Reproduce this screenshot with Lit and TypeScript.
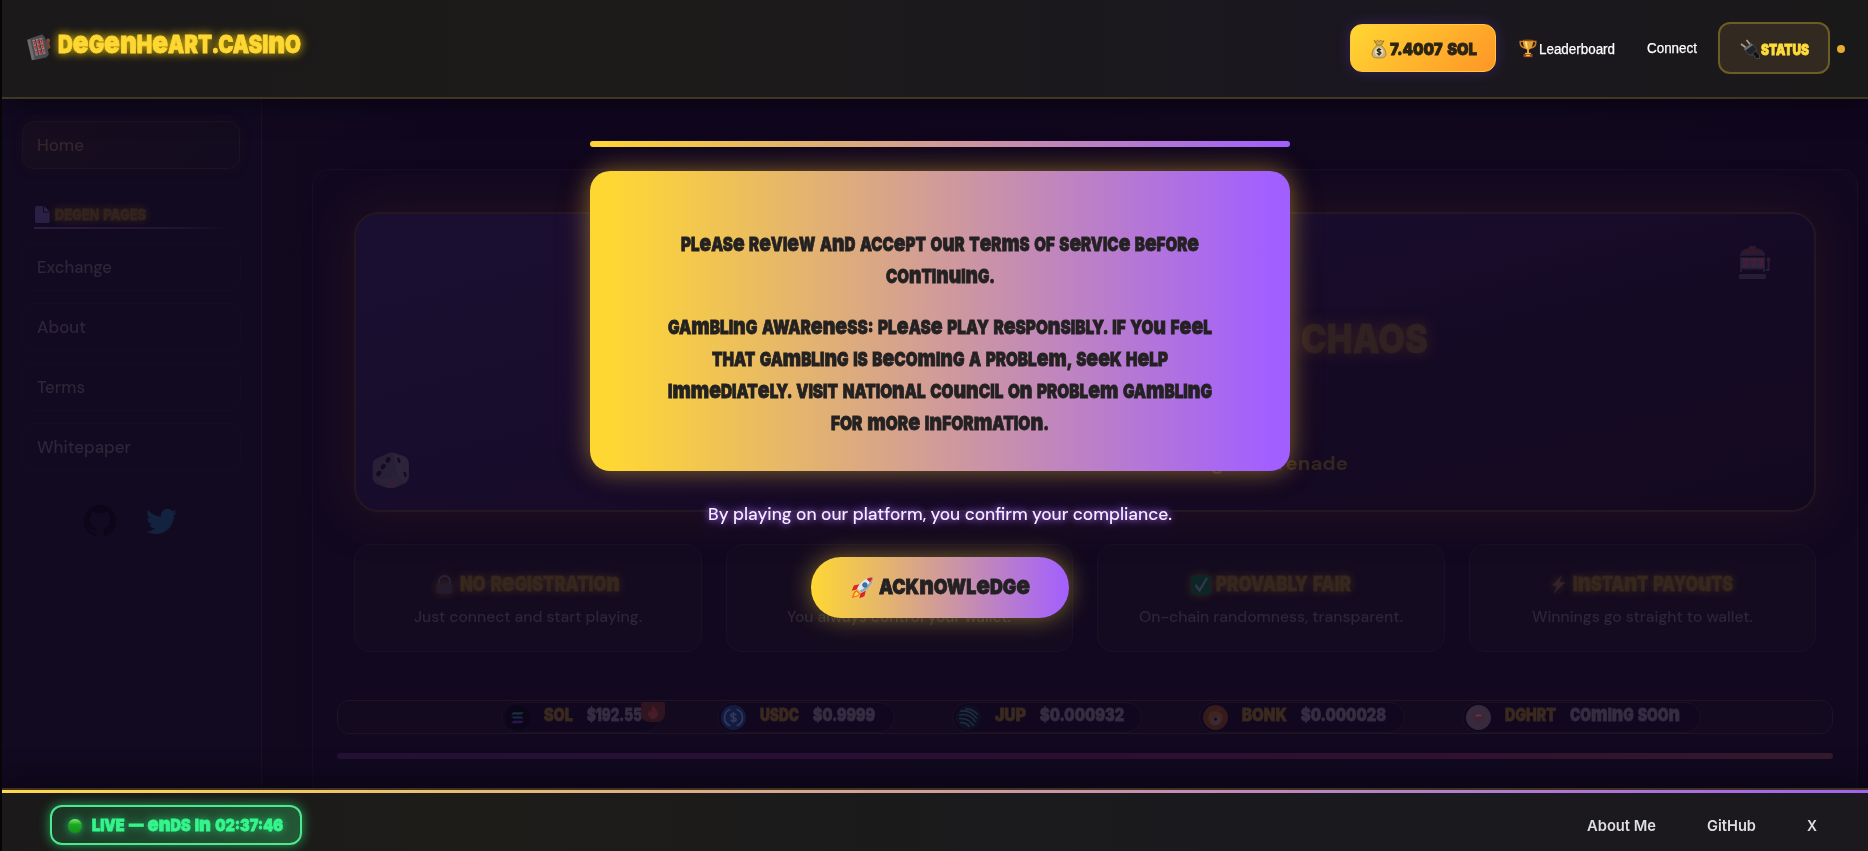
import { LitElement, html, svg, css } from "lit";
import { customElement, property } from "lit/decorators.js";

/** One line of lettering, stretched horizontally to a given width. */
@customElement("fit-text")
export class FitText extends LitElement {
  @property() text = "";
  @property({ type: Number }) w = 100;
  @property({ type: Number }) size = 16;
  @property({ type: Number }) h = 16;
  @property({ type: Boolean }) funky = false;

  static styles = css`
    :host { display: block; flex: none; white-space: nowrap; }
    .line { display: inline-block; transform-origin: 0 50%; vertical-align: top; }
    .display { font-family: Inter, Lato, sans-serif; font-weight: 900; word-spacing: 0.1em; -webkit-text-stroke: 0.8px currentColor; }
    .big { font-size: 1.27em; line-height: 0; }
  `;

  updated() {
    const line = this.renderRoot.querySelector(".line") as HTMLElement;
    line.style.transform = "none";
    const natural = line.getBoundingClientRect().width;
    if (natural) line.style.transform = `scaleX(${this.w / natural})`;
  }

  render() {
    const box = `font-size:${this.size}px;line-height:${this.h}px;height:${this.h}px`;
    this.style.width = `${this.w}px`;
    this.style.height = `${this.h}px`;
    if (!this.funky) return html`<span class="line" style=${box}>${this.text}</span>`;
    // Display lettering mixes capitals with enlarged e / n / m / u.
    const runs = this.text.match(/[enmu]+|[^enmu]+/g) ?? [];
    return html`<span class="line display" style=${box}>${runs.map((r) =>
      /[enmu]/.test(r[0]) ? html`<span class="big">${r}</span>` : r.toUpperCase()
    )}</span>`;
  }
}

const funky = (text: string, w: number, size: number, h = size) =>
  html`<fit-text class="funky" funky .text=${text} .w=${w} .size=${size} .h=${h}></fit-text>`;

const plain = (text: string, w: number, size: number, cls = "") =>
  html`<fit-text class="plain ${cls}" .text=${text} .w=${w} .size=${size} .h=${size}></fit-text>`;

const slotTilted = html`<svg class="ic" width="26" height="27" viewBox="0 0 26 27">
  <g transform="rotate(-13 12 13)"><path d="M20 9l4 1.5v6L20 18z" fill="#6d4438"/><circle cx="23.3" cy="9" r="2" fill="#7d463c"/>
  <path d="M3 3.5h4v21H3z" fill="#6d6d70"/><path d="M6 3l13-1.5 2 4v17l-3 2.5H6z" fill="#4d4c50"/>
  <rect x="8" y="5" width="10" height="16" fill="#8b8689"/>
  <path d="M11 5v16M14.6 5v16" stroke="#3a383c" stroke-width="1"/>
  <g stroke="#b92d2b" stroke-width="1.2" fill="none"><path d="M8.3 7h2l-1 3M11.8 7h2l-1 3M15.3 7h2l-1 3M8.3 12h2l-1 3M11.8 12h2l-1 3M15.3 12h2l-1 3M8.3 17h2l-1 3M11.8 17h2l-1 3M15.3 17h2l-1 3"/></g></g></svg>`;

const moneyBag = html`<svg class="ic" width="16" height="20" viewBox="0 0 16 20">
  <path d="M3 1.5l2 1 1.5-1.3L8 2.5l2-1.3 1 1.3 2-.8-2.6 4.6H6z" fill="#d0a24c" stroke="#775a20" stroke-width=".6"/>
  <path d="M5.8 6.5h4.6C13.5 9 15 12 15 15c0 3-2 4-7 4s-7-1-7-4c0-3 1.7-6 4.8-8.5z" fill="#cfb27c" stroke="#7c6330" stroke-width=".6"/>
  <path d="M5.2 6.4h5.8" stroke="#a92" stroke-width="1.4"/><circle cx="8" cy="12.8" r="4.4" fill="#e9dcae"/>
  <path d="M10 11c-.5-1-3.8-1.3-3.8.3 0 1.7 3.8 1 3.8 2.8 0 1.6-3.4 1.5-4 .2M8 9v7.8" fill="none" stroke="#222" stroke-width="1.2"/></svg>`;

const trophy = html`<svg class="ic" width="18" height="19" viewBox="0 0 18 19">
  <path d="M4 2.5H1.2C1 6 3 8.5 6 9M14 2.5h2.8C17 6 15 8.5 12 9" fill="none" stroke="#c7791c" stroke-width="1.5"/>
  <path d="M3.8 1h10.4c0 5-1.4 9-4.2 9.7V14H8v-3.3C5.2 10 3.8 6 3.8 1z" fill="#e3a02f"/>
  <path d="M6 2h2.2c0 4 .3 6 1 8C7 9 6 6 6 2z" fill="#fbe08a"/><ellipse cx="9" cy="1.4" rx="5.2" ry=".9" fill="#8c4e12"/>
  <path d="M6.5 13.8h5l.8 1.4H5.7z" fill="#f0b94a"/><path d="M4.5 15h9v3.2h-9z" fill="#9b4a18"/><path d="M7 15.8h4v1.5H7z" fill="#e8b850"/></svg>`;

const plug = html`<svg class="ic" width="20" height="20" viewBox="0 0 20 20">
  <path d="M1 5l5.500 4M6.500 1L10.500 6" stroke="#aaa48c" stroke-width="1.7"/>
  <path d="M11.500 4.500l4.800 4.800-.6 4.200-3 2.500-4.100-.4L4 10z" fill="#202328" stroke="#4d5056" stroke-width=".7"/><path d="M11.5 4.500L4 10l1.400 1.500 7.600-5.500z" fill="#6a6e75"/>
  <path d="M12.5 14.500l3-2.500 4 4v3.500h-3.500z" fill="#121316" stroke="#54565c" stroke-width=".7"/></svg>`;

const rocket = html`<svg class="ic" width="23" height="23" viewBox="0 0 24 24">
  <path d="M9 8.500L3 10 .8 15.500l5-1.500zM15.500 15L14 21l-5.300 2.200L10 18z" fill="#d8262c"/>
  <path d="M6 14.500C2.500 15.500 2.300 19 .8 23c4-1.200 7.700-1.500 8.700-5z" fill="#ff6a1a"/><path d="M5.8 16.500c-2 .8-2 3-2.700 4.800 2-.6 4.200-.8 5-2.800z" fill="#ffe14a"/>
  <path d="M22.500 1.500C16 1.500 10.500 5 6.500 13l4.500 4.500c8-4 11.500-9.500 11.500-16z" fill="#dbe6ee"/>
  <path d="M22.500 1.500c-2.200 0-4.400.5-6.300 1.500l4.800 4.800c1-1.900 1.500-4.100 1.500-6.300z" fill="#d8262c"/>
  <path d="M22.500 1.500c0 6.500-3.500 12-11.500 16l-2-2C16 11.500 20.500 7 22.500 1.500z" fill="#92a7b8"/>
  <circle cx="14.5" cy="9.4" r="2.3" fill="#237cc0" stroke="#47596a" stroke-width="1"/></svg>`;

const pageIcon = html`<svg class="ic" width="15" height="17" viewBox="0 0 15 17"><path d="M0 1.5Q0 0 1.5 0H8v6.5h6.7V15.5Q14.7 17 13.2 17H1.5Q0 17 0 15.5z" fill="#292045"/><path d="M9.2 0l5.5 5.4H9.2z" fill="#2e2547"/></svg>`;

const github = html`<svg class="ic" width="32" height="32" viewBox="0 0 16 16"><path fill="#0d0619" d="M8 0C3.580 0 0 3.580 0 8c0 3.540 2.290 6.530 5.470 7.590.4.070.55-.17.55-.38 0-.19-.01-.82-.01-1.490-2.010.37-2.530-.49-2.690-.94-.09-.23-.48-.94-.82-1.130-.28-.15-.68-.52-.01-.53.63-.01 1.080.58 1.230.82.72 1.210 1.870.87 2.330.66.070-.52.280-.87.510-1.070-1.780-.2-3.640-.89-3.640-3.950 0-.87.310-1.590.82-2.150-.08-.2-.36-1.020.08-2.120 0 0 .67-.21 2.200.82.640-.18 1.320-.27 2-.27s1.360.09 2 .27c1.530-1.040 2.200-.82 2.200-.82.440 1.100.16 1.920.08 2.120.51.560.82 1.270.82 2.150 0 3.070-1.870 3.750-3.650 3.950.29.25.54.73.54 1.480 0 1.070-.01 1.930-.01 2.200 0 .21.15.46.55.38A8.010 8.010 0 0016 8c0-4.420-3.580-8-8-8z"/></svg>`;

const twitter = html`<svg class="ic" width="31" height="31" viewBox="0 0 24 24"><path fill="#13233f" d="M23.953 4.570a10 10 0 01-2.825.775 4.958 4.958 0 002.163-2.723c-.951.555-2.005.959-3.127 1.184a4.920 4.920 0 00-8.384 4.482C7.690 8.095 4.067 6.130 1.640 3.162a4.822 4.822 0 00-.666 2.475c0 1.710.87 3.213 2.188 4.096a4.904 4.904 0 01-2.228-.616v.06a4.923 4.923 0 003.946 4.827 4.996 4.996 0 01-2.212.085 4.936 4.936 0 004.604 3.417 9.867 9.867 0 01-6.102 2.105c-.39 0-.779-.023-1.170-.067a13.995 13.995 0 007.557 2.209c9.053 0 13.998-7.496 13.998-13.985 0-.21 0-.42-.015-.63A9.935 9.935 0 0024 4.590z"/></svg>`;

const slotFaint = html`<svg class="ic" width="33" height="33" viewBox="0 0 33 33">
  <path d="M2 9C3 3 8 2 14.500 2S26 3 27 9v17H2z" fill="#281a36"/><path d="M4 8c1-4 5-5 10.500-5S24 4 25 8z" fill="#30182d"/><rect x="11" y="0" width="7" height="3" rx="1" fill="#30182d"/>
  <rect x="3" y="11.500" width="23" height="10.500" fill="#2c233d"/><rect x="1" y="28" width="27" height="5" rx="1" fill="#271d38"/><rect x="4" y="23.500" width="21" height="3" fill="#130b22"/>
  <path d="M2.500 10.500h24" stroke="#120a20" stroke-width="1.5"/><path d="M28 24h2.500V14" fill="none" stroke="#291d38" stroke-width="2"/><circle cx="30.5" cy="13.5" r="2" fill="#3b182b"/>
  <g fill="none" stroke="#511a32" stroke-width="2"><path d="M4.500 14h5l-2.500 7M12 14h5l-2.500 7M19.500 14h5L22 21"/></g></svg>`;

const dice = html`<svg class="ic" width="38" height="37" viewBox="0 0 39 38">
  <path d="M18 .8Q21 0 24 1L33 4Q37 6 38 11V24Q38 30 34 32L24 36.500Q19 38 14 36.500L5 33Q1 31 .6 26V13Q1 8 5 6.500z" fill="#272036"/>
  <path d="M22 2L33 5Q37 7 37.500 12V24Q37 30 33 32l-7-8z" fill="#2b243a"/><path d="M3 28L25 24l7 8-8 4Q19 38 14 36z" fill="#292238"/>
  <g fill="#130b20"><ellipse cx="16.5" cy="8" rx="2.2" ry="3" transform="rotate(25 16.5 8)"/><ellipse cx="11.5" cy="15" rx="2.2" ry="3" transform="rotate(35 11.5 15)"/><ellipse cx="7" cy="22" rx="2.2" ry="3" transform="rotate(40 7 22)"/><ellipse cx="27.5" cy="8.500" rx="1.5" ry="3" transform="rotate(-20 27.5 8.5)"/><ellipse cx="34" cy="23" rx="1.4" ry="3" transform="rotate(-15 34 23)"/></g>
  <ellipse cx="19.5" cy="32" rx="3.8" ry="1.5" fill="#42192e"/></svg>`;

const lock = html`<svg class="ic" width="17" height="19" viewBox="0 0 17 19"><path d="M3 9V6.500a5.500 5.500 0 0111 0V9" fill="none" stroke="#2a2436" stroke-width="1.8"/><rect x=".5" y="8.5" width="16" height="10" rx="1" fill="#241b2c"/></svg>`;
const check = html`<svg class="ic" width="20" height="20" viewBox="0 0 20 20"><rect width="20" height="20" rx="3" fill="#0e2528"/><path d="M4.500 10l4 5.500L16 3" fill="none" stroke="#35374a" stroke-width="2.2"/></svg>`;
const bolt = html`<svg class="ic" width="15" height="19" viewBox="0 0 15 19"><path d="M11 0L1 10.500l5 .5L2.500 19 14 7.500 8.500 7z" fill="#34232b"/></svg>`;
const greenDot = html`<svg class="ic dot" width="14" height="14" viewBox="0 0 14 14"><defs><linearGradient id="g" x1="0" y1="0" x2="0" y2="1"><stop offset="0" stop-color="#7cf06a"/><stop offset=".4" stop-color="#1fa524"/><stop offset="1" stop-color="#129318"/></linearGradient></defs><circle cx="7" cy="7" r="7" fill="url(#g)"/></svg>`;
const flame = html`<svg width="12" height="14" viewBox="0 0 12 14"><path d="M6 0c1 3 5 5 5 9 0 3-2 5-5 5s-5-2-5-5c0-2 1-3 2-4 .3 1 .6 1.500 1.200 2C4.500 5 5 2 6 0z" fill="#4a1a26"/><path d="M6 7c1 2 2 2.500 2 4a2 2 0 01-4 0c0-1.500 1.500-2 2-4z" fill="#3d2330"/></svg>`;

const coins: Record<string, unknown> = {
  SOL: svg`<circle cx="12" cy="12" r="12" fill="#0b0719"/><g><path d="M8 7h10l-2 2H6z" fill="#14333c"/><path d="M6 11h10l2 2H8z" fill="#1d2650"/><path d="M8 15h10l-2 2.500H6z" fill="#2c154e"/></g>`,
  USDC: svg`<circle cx="12" cy="12" r="12" fill="#131c40"/><g fill="none" stroke="#33385c" stroke-width="1.6"><path d="M9 4a8.500 8.500 0 000 16M15 4a8.500 8.500 0 010 16M14.500 10c-.4-2-5-2.300-5 0 0 2.400 5 1.500 5 4 0 2.300-4.600 2.300-5 0M12 7v10"/></g>`,
  JUP: svg`<circle cx="12" cy="12" r="12" fill="#100e22"/><g fill="none" stroke="#1c2e40" stroke-width="1.5"><path d="M4 6q9-2 16 7M3 9.500q10-2 16 7M3 13q9-1 14 7M4 17q6-.5 9 4M9 3.500q8 .5 12 6"/></g>`,
  BONK: svg`<circle cx="12" cy="12" r="12" fill="#361b1d"/><path d="M5 13Q5 5 12 6t7 5q0 8-7 9-6 0-7-7z" fill="#41251e"/><path d="M8 13q4-4 9 0-1 6-5 6-3 0-4-6z" fill="#352c3c"/><circle cx="12" cy="13.5" r="1.6" fill="#160c1e"/><path d="M13 4l4 1" stroke="#451a22" stroke-width="2"/>`,
  DGHRT: svg`<circle cx="12" cy="12" r="12" fill="#352b3d"/><circle cx="12" cy="12" r="8.5" fill="none" stroke="#43293a"/><path d="M12 17q-6-4.500-5-8 2-3 5 0 3-3 5 0 1 3.500-5 8z" fill="#462033"/><path d="M9 10h6" stroke="#4a3e50" stroke-width="2"/>`,
};

const nav = [
  { label: "Exchange", w: 75 },
  { label: "About", w: 49 },
  { label: "Terms", w: 48 },
  { label: "Whitepaper", w: 94 },
];

const tokens = [
  { name: "SOL", nw: 29, price: "$192.55", pw: 55, w: 159 },
  { name: "USDC", nw: 39, price: "$0.9999", pw: 62, w: 178 },
  { name: "JUP", nw: 31, price: "$0.000932", pw: 84, w: 190 },
  { name: "BONK", nw: 45, price: "$0.000028", pw: 85, w: 206 },
  { name: "DGHRT", nw: 51, price: "Coming Soon", pw: 110, w: 239 },
];

const features = [
  { icon: lock, title: "No Registration", tw: 160, gap: 7, desc: "Just connect and start playing.", dw: 228 },
  { icon: null, title: "", tw: 0, gap: 0, desc: "You always control your wallet.", dw: 224 },
  { icon: check, title: "PROVABLY FAIR", tw: 135, gap: 5, desc: "On-chain randomness, transparent.", dw: 264 },
  { icon: bolt, title: "Instant Payouts", tw: 160, gap: 7, desc: "Winnings go straight to wallet.", dw: 221 },
];

@customElement("app-root")
export class AppRoot extends LitElement {
  static styles = css`
    :host { display: block; position: relative; width: 1868px; height: 851px; overflow: hidden; box-sizing: border-box; border-left: 2px solid #060507; background: #10071e; font-family: Inter, "Liberation Sans", sans-serif; }
    * { box-sizing: border-box; }
    svg { display: block; flex: none; overflow: visible; }
    .plain { font-family: "DM Sans", Inter, sans-serif; font-weight: 400; }
    .plain.arial { font-family: "Liberation Sans", Arial, sans-serif; -webkit-text-stroke: 0.25px currentColor; }
    .plain.inter { font-family: Inter, sans-serif; font-weight: 600; }
    .plain.semi { font-weight: 500; }
    .plain.bold { font-weight: 700; }
    .page { display: grid; grid-template-rows: 99px 689px 63px; height: 851px; }

    header { display: flex; align-items: center; border-bottom: 2px solid #3f3722; background: linear-gradient(90deg, #1b191a, #1c1b19 33%, #1b1720 72%, #1b181c 90%, #1a1919); padding: 0 23px 0 25px; z-index: 1; box-shadow: 0 4px 24px rgba(4, 2, 14, 0.6); }
    .logo { display: flex; align-items: center; gap: 5px; padding-bottom: 7px; margin-right: auto; color: #ffd732; }
    .logo .ic { margin-top: 5px; margin-left: -1px; margin-right: 1px; }
    .logo .funky { filter: drop-shadow(0 0 4px rgba(255, 215, 0, 0.65)) drop-shadow(0 0 5px rgba(255, 215, 0, 0.25)); }
    .balance { display: flex; align-items: center; justify-content: center; gap: 3px; width: 146px; height: 48px; border-radius: 12px; border: 1px solid #ffc744; background: linear-gradient(135deg, #ffd733, #ff9526); color: #2c2415; box-shadow: 0 0 14px rgba(130, 70, 230, 0.25); margin: -1px 23px 0 0; padding: 2px 0 0 1px; }
    .lead { display: flex; align-items: center; gap: 2px; color: #fff; margin-right: 32px; }
    .connect { color: #fff; margin-right: 21px; padding-bottom: 1px; }
    .status { display: flex; align-items: center; justify-content: center; gap: 1px; width: 112px; height: 52px; border-radius: 12px; border: 2px solid #6b5d27; background: #322a20; color: #ffdc3a; margin: -1px 7px 0 0; padding-top: 2px; }
    .pip { width: 8px; height: 8px; border-radius: 50%; background: #e5ae32; }

    .body { display: grid; grid-template-columns: 260px 1fr; min-height: 0; }
    aside { border-right: 1px solid #1a1126; background: #120a20; padding: 22px 20px 0; }
    .item { display: flex; align-items: center; height: 48px; border-radius: 12px; padding: 2px 0 0 14px; border: 1px solid #150d23; color: #2e2638; margin-bottom: 12px; }
    .item.on { background: linear-gradient(135deg, #170e1f, #130b1f); border-color: #1d1421; color: #33262b; margin-bottom: 36px; width: 218px; box-shadow: 0 0 12px rgba(60, 36, 30, 0.18); }
    .heading { display: flex; align-items: center; gap: 5px; padding: 0 0 3px; margin-left: 13px; height: 21px; color: #33241f; }
    .heading .funky { filter: drop-shadow(0 0 4px rgba(110, 72, 20, 0.4)); margin-top: 2px; }
    .rule { height: 2px; width: 196px; margin: 1px 0 14px 12px; background: linear-gradient(90deg, #2b1d45, #1f1533 70%, transparent); }
    .social { display: flex; gap: 30px; padding: 22px 0 0 62px; align-items: center; }

    main { padding: 70px 10px 0 50px; min-width: 0; background: linear-gradient(90deg, #12091f, #10071e 12%, #11081e 80%, #10061d); }
    .panel { height: 619px; border: 1px solid #180f23; border-bottom: 0; border-radius: 16px 16px 0 0; background: #120920; padding: 42px 24px 0 24px; }
    .hero { position: relative; margin: 0 17px 32px 17px; height: 300px; border: 2px solid #231722; border-radius: 24px; background: linear-gradient(165deg, #1b0f31, #190d2e 35%, #150a24 65%, #13091f); box-shadow: 0 0 44px rgba(62, 26, 34, 0.5); padding: 97px 386px 0 0; display: flex; flex-direction: column; align-items: flex-end; color: #302122; }
    .hero .chaos .funky { filter: drop-shadow(0 0 7px rgba(110, 60, 20, 0.35)); }
    .sub { margin: 86px 80px 0 0; color: #33261f; }
    .slot { position: absolute; right: 43px; top: 32px; }
    .dice { position: absolute; left: 16px; bottom: 21px; }
    .cards { display: grid; grid-template-columns: repeat(4, 1fr); gap: 24px; margin: 0 17px 48px 17px; }
    .card { height: 108px; border: 1px solid #1a1124; border-radius: 16px; background: #140b20; padding-top: 29px; display: flex; flex-direction: column; align-items: center; color: #2e2538; gap: 15px; }
    .title { display: flex; align-items: center; height: 21px; color: #36271f; }
    .title > * { filter: drop-shadow(0 0 4px rgba(120, 80, 16, 0.38)); }
    .ticker { display: flex; gap: 57px; padding-left: 163px; align-items: center; height: 34px; border: 1px solid #1f1424; border-radius: 12px; background: #130a1f; }
    .token { position: relative; display: flex; align-items: center; height: 31px; border: 1px solid #1a1121; border-radius: 16px; padding-left: 3px; background: #110820; }
    .token .name { margin-left: 14px; color: #3a291f; }
    .token .price { margin-left: 14px; color: #352d40; }
    .token .name, .token .price { padding-bottom: 3px; }
    .hot { position: absolute; right: -6px; top: -1px; width: 24px; height: 20px; border-radius: 2px 2px 8px 8px; background: #2e151f; display: flex; align-items: center; justify-content: center; }
    .bar { height: 6px; border-radius: 3px; margin-top: 19px; background: linear-gradient(90deg, #241136, #2d1034 50%, #321230 75%, #341a2e); }

    footer { display: flex; align-items: center; border-top: 2px solid #3f311f; position: relative; background: linear-gradient(90deg, #1b191a, #1d1c19 25%, #1a191d 65%, #1b191d); padding: 9px 51px 0 48px; box-shadow: 0 -8px 28px rgba(6, 3, 14, 0.6); z-index: 1; }
    footer::before { content: ""; position: absolute; left: 0; right: 0; top: 0; height: 3px; background: linear-gradient(90deg, #ffd94a, #a063f0); }
    .live { display: flex; align-items: center; gap: 10px; width: 252px; height: 40px; margin: -1px auto 0 0; padding-left: 16px; border-radius: 12px; border: 2px solid #4ee88e; background: linear-gradient(135deg, #1c3425, #235a36); color: #35f58d; box-shadow: 0 0 12px rgba(36, 240, 120, 0.65); }
    .live .funky { filter: drop-shadow(0 0 4px rgba(40, 240, 130, 0.6)); }
    .dot { filter: drop-shadow(0 0 4px rgba(40, 240, 130, 0.7)); margin-top: 2px; }
    .links { display: flex; gap: 51px; color: #dedde0; }

    .modal { position: absolute; z-index: 3; left: 588px; top: 141px; width: 700px; display: flex; flex-direction: column; align-items: center; }
    .line { width: 700px; height: 6px; border-radius: 3px; background: linear-gradient(90deg, #ffd733, #a25fff); }
    .notice { width: 700px; height: 300px; margin-top: 24px; border-radius: 20px; background: linear-gradient(90deg, #ffd733 3%, #a25fff 97%); padding-top: 58px; display: flex; flex-direction: column; align-items: center; color: #242122; box-shadow: 0 0 24px rgba(255, 215, 50, 0.42), 0 0 40px rgba(190, 80, 60, 0.12); }
    .gap { height: 19px; }
    .confirm { margin-top: 35px; color: #f4ecff; filter: drop-shadow(0 0 3px rgba(162, 95, 255, 0.8)) drop-shadow(0 0 5px rgba(162, 95, 255, 0.4)); }
    button { appearance: none; font: inherit; display: flex; align-items: center; justify-content: center; gap: 5px; width: 258px; height: 61px; margin: 33px 0 0; padding: 1px 0 0; border: 0; border-radius: 30px; background: linear-gradient(90deg, #ffd733, #a25fff); color: #242122; box-shadow: 0 0 24px rgba(255, 215, 50, 0.45); }
  `;

  render() {
    return html`
      <div class="page">
        <header>
          <div class="logo">${slotTilted}${funky("DegenHeart.Casino", 243, 24)}</div>
          <div class="balance">${moneyBag}${funky("7.4007 SOL", 87, 16.5)}</div>
          <div class="lead">${trophy}${plain("Leaderboard", 76, 14, "arial")}</div>
          <div class="connect">${plain("Connect", 50, 14, "arial")}</div>
          <div class="status">${plug}${funky("STATUS", 48, 15)}</div>
          <span class="pip"></span>
        </header>
        <div class="body">
          <aside>
            <div class="item on">${plain("Home", 47, 16.5, "semi")}</div>
            <div class="heading">${pageIcon}${funky("DEGEN PAGES", 91, 14)}</div>
            <div class="rule"></div>
            ${nav.map((n) => html`<div class="item">${plain(n.label, n.w, 16.5, "semi")}</div>`)}
            <div class="social">${github}${twitter}</div>
          </aside>
          <main>
            <div class="panel">
              <section class="hero">
                <div class="slot">${slotFaint}</div>
                <div class="chaos">${funky("CHAOS", 127, 40, 56)}</div>
                <div class="sub">${plain("Degen Serenade", 163, 20, "bold")}</div>
                <div class="dice">${dice}</div>
              </section>
              <section class="cards">
                ${features.map((f) => html`<div class="card">
                  <div class="title" style="gap:${f.gap}px">${f.icon}${f.title ? funky(f.title, f.tw, 19.5) : null}</div>
                  ${plain(f.desc, f.dw, 15.5, "semi")}
                </div>`)}
              </section>
              <div class="ticker">
                ${tokens.map((t) => html`<div class="token" style="width:${t.w}px">
                  <svg width="25" height="25" viewBox="0 0 24 24">${coins[t.name]}</svg>
                  <span class="name">${funky(t.name, t.nw, 17)}</span>
                  <span class="price">${funky(t.price, t.pw, 17)}</span>
                  ${t.name === "SOL" ? html`<span class="hot">${flame}</span>` : null}
                </div>`)}
              </div>
              <div class="bar"></div>
            </div>
          </main>
        </div>
        <footer>
          <div class="live">${greenDot}${funky("LIVE — ends in 02:37:46", 191, 16)}</div>
          <div class="links">
            ${plain("About Me", 69, 15, "inter")}${plain("GitHub", 49, 15, "inter")}${plain("X", 10, 15, "inter")}
          </div>
        </footer>
      </div>
      <div class="modal">
        <div class="line"></div>
        <div class="notice">
          ${funky("Please review and accept our Terms of Service before", 518, 19, 32)}
          ${funky("continuing.", 109, 19, 32)}
          <div class="gap"></div>
          ${funky("Gambling Awareness: Please play responsibly. If you feel", 544, 19, 32)}
          ${funky("that gambling is becoming a problem, seek help", 456, 19, 32)}
          ${funky("immediately. Visit National Council on Problem Gambling", 544, 19, 32)}
          ${funky("for more information.", 218, 19, 32)}
        </div>
        <div class="confirm">${plain("By playing on our platform, you confirm your compliance.", 464, 17.5, "semi")}</div>
        <button>${rocket}${funky("Acknowledge", 151, 20.5)}</button>
      </div>
    `;
  }
}
